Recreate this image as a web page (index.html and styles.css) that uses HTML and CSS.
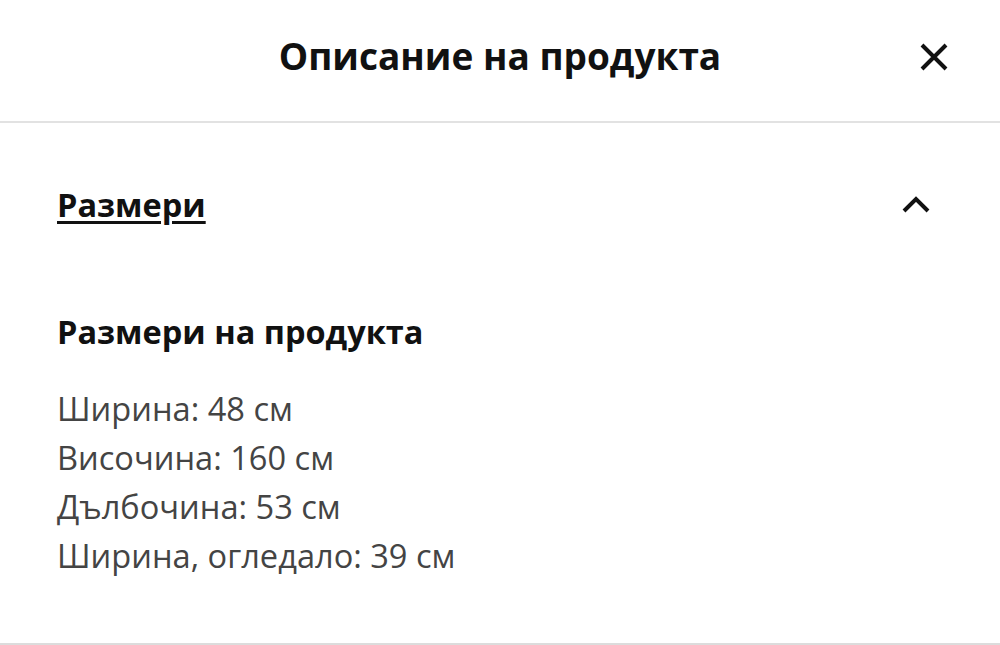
FILE: index.html
```
<!DOCTYPE html>
<html lang="bg">
<head>
<meta charset="utf-8">
<link rel="stylesheet" href="styles.css">
</head>
<body>
<div class="page">
  <header class="header">
    <h1 class="title">Описание на продукта</h1>
    <button class="close" aria-label="Затвори">
      <svg width="32" height="32" viewBox="0 0 32 32"><path d="M4 4 L28 28 M28 4 L4 28" stroke="#111" stroke-width="4" fill="none"/></svg>
    </button>
  </header>
  <section class="section">
    <div class="sec-head">
      <span class="sec-title">Размери</span>
      <svg class="chev" width="30" height="18" viewBox="0 0 30 18"><path d="M3 15 L15 3 L27 15" stroke="#111" stroke-width="4" fill="none"/></svg>
    </div>
    <h2 class="sub">Размери на продукта</h2>
    <ul class="list">
      <li>Ширина: 48 см</li>
      <li>Височина: 160 см</li>
      <li>Дълбочина: 53 см</li>
      <li>Ширина, огледало: 39 см</li>
    </ul>
  </section>
</div>
</body>
</html>
```
FILE: styles.css
```
* { box-sizing: border-box; }
html, body { margin: 0; padding: 0; background: #fff; }
body { font-family: "Open Sans", "Noto Sans", sans-serif; color: #111; }
.page { width: 1000px; height: 645px; display: flex; flex-direction: column; border-bottom: 2px solid #dcdcdc; }
.header { height: 123px; border-bottom: 2px solid #e2e2e2; display: flex; align-items: center; justify-content: center; position: relative; }
.title { margin: 0; font-size: 37px; font-weight: 700; line-height: 1.3; padding-bottom: 8px; }
.close { position: absolute; right: 50px; top: 41px; background: none; border: 0; padding: 0; width: 32px; height: 32px; }
.close svg { display: block; }
.section { padding: 0 57px; flex: 1; }
.sec-head { display: flex; align-items: center; justify-content: space-between; height: 164px; padding-right: 12px; }
.sec-title { font-size: 32.5px; font-weight: 700; line-height: 1.3; text-decoration: underline; text-decoration-thickness: 3px; text-underline-offset: 4px; }
.sub { margin: 23px 0 30px; font-size: 32.5px; font-weight: 700; line-height: 44px; }
.list { list-style: none; margin: 0; padding: 0; font-size: 32.6px; line-height: 49px; color: #444; }
```
